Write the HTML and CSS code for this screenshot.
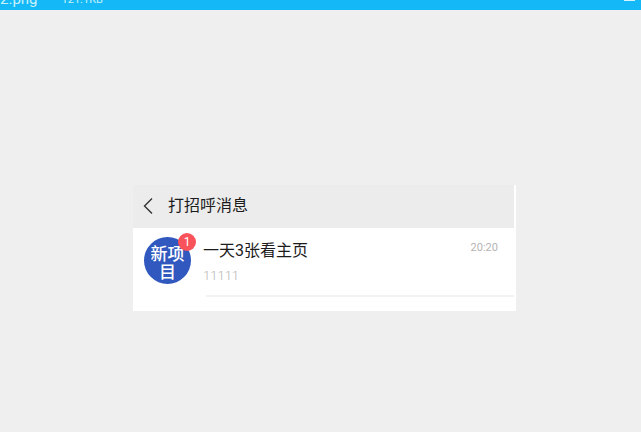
FILE: index.html
```html
<!DOCTYPE html>
<html lang="zh-CN">
<head>
<meta charset="utf-8">
<meta name="viewport" content="width=device-width, initial-scale=1">
<title>打招呼消息</title>
<link rel="stylesheet" href="styles.css">
</head>
<body>
<header class="titlebar">
  <span class="file-name">2.png</span>
  <span class="file-size">121.1KB</span>
  <button class="window-button" type="button" aria-label="最小化"><span class="window-glyph"></span></button>
</header>
<main class="viewer">
  <section class="card">
    <div class="card-header">
      <button class="back" type="button" aria-label="返回">
        <svg width="10" height="18" viewBox="0 0 10 18" fill="none" stroke="#333" stroke-width="1.4"><path d="M9 1.5 1.5 9 9 16.5"/></svg>
      </button>
      <h1 class="card-title">打招呼消息</h1>
    </div>
    <article class="message">
      <div class="avatar">
        <span>新项</span>
        <span>目</span>
        <span class="badge">1</span>
      </div>
      <div class="body">
        <div class="top">
          <h2 class="name">一天3张看主页</h2>
          <time class="time">20:20</time>
        </div>
        <p class="preview">11111</p>
      </div>
    </article>
  </section>
</main>
</body>
</html>
```
FILE: styles.css
```css
* {
  box-sizing: border-box;
}

body {
  margin: 0;
  background: #efefef;
  color: #1c1c1c;
  font-family: Roboto, "Noto Sans CJK SC", sans-serif;
}

h1, h2, p {
  margin: 0;
  font-weight: 400;
}

button {
  padding: 0;
  border: 0;
  background: none;
}

.titlebar {
  display: flex;
  align-items: flex-end;
  gap: 24px;
  height: 10px;
  overflow: hidden;
  background: #14b8f7;
  color: #c9f1fb;
  font-size: 15px;
  line-height: 22px;
}

.file-size {
  font-size: 11px;
  line-height: 20px;
}

.window-button {
  align-self: flex-start;
  height: 1px;
  margin-left: auto;
  padding-right: 6px;
}

.window-glyph {
  display: block;
  width: 11px;
  height: 1px;
  background: #d5f4fd;
}

.viewer {
  padding: 175px 125px 24px 133px;
}

.card {
  padding: 0 2px 14px 0;
  background: #fff;
}

.card-header {
  display: flex;
  align-items: center;
  gap: 15px;
  height: 43px;
  padding: 0 10px 2px;
  background: #ececec;
}

.back {
  display: flex;
}

.card-title {
  font-size: 16px;
  line-height: 24px;
}

.message {
  display: flex;
  gap: 12px;
  padding: 9px 0 0 11px;
}

.avatar {
  position: relative;
  display: flex;
  flex: none;
  flex-direction: column;
  align-items: center;
  padding-top: 8px;
  width: 47px;
  height: 47px;
  border-radius: 50%;
  background: #3058be;
  color: #fff;
  font-size: 17px;
  font-weight: 500;
  line-height: 18px;
}

.badge {
  position: absolute;
  top: -4px;
  right: -5px;
  width: 18px;
  height: 18px;
  border-radius: 50%;
  background: #f8525a;
  font-size: 12px;
  font-weight: 400;
  line-height: 18px;
  text-align: center;
}

.body {
  flex: 1;
  height: 60px;
  background: linear-gradient(#f3f3f3, #f3f3f3) 3px 100% / 100% 2px no-repeat;
}

.top {
  display: flex;
  justify-content: space-between;
  padding-right: 16px;
}

.name {
  font-size: 16px;
  line-height: 28px;
}

.time {
  color: #b4b4b4;
  font-size: 11px;
  line-height: 22px;
}

.preview {
  color: #b4b4b4;
  font-size: 13px;
  font-weight: 300;
  line-height: 22px;
}
```
